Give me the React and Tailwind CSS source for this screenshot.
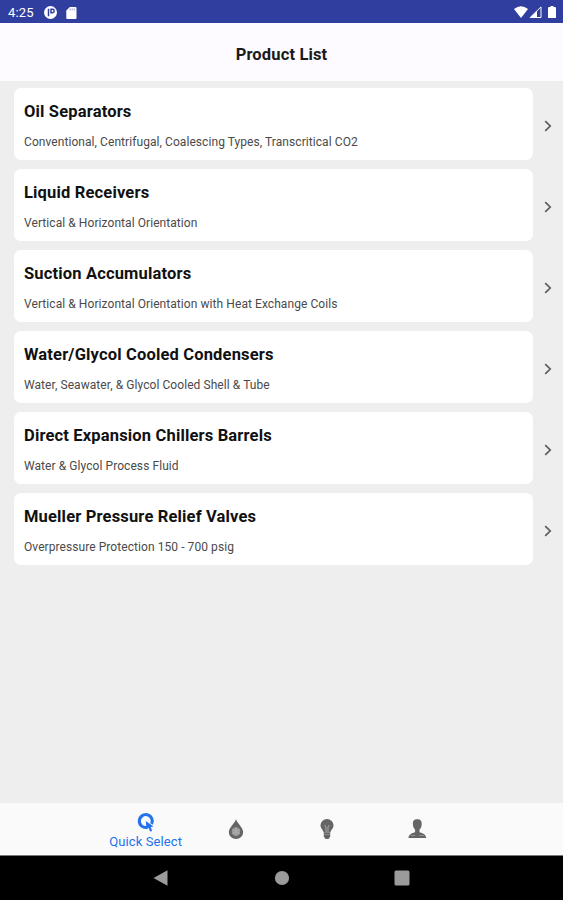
import React, { useState } from 'react';

const products = [
  { title: 'Oil Separators', detail: 'Conventional, Centrifugal, Coalescing Types, Transcritical CO2' },
  { title: 'Liquid Receivers', detail: 'Vertical & Horizontal Orientation' },
  { title: 'Suction Accumulators', detail: 'Vertical & Horizontal Orientation with Heat Exchange Coils' },
  { title: 'Water/Glycol Cooled Condensers', detail: 'Water, Seawater, & Glycol Cooled Shell & Tube' },
  { title: 'Direct Expansion Chillers Barrels', detail: 'Water & Glycol Process Fluid' },
  { title: 'Mueller Pressure Relief Valves', detail: 'Overpressure Protection 150 - 700 psig' },
];

const QuickIcon = () => (
  <svg className="w-5 h-5" viewBox="0 0 20 20" fill="none">
    <path d="M11.200 15.400A6.500 6.500 0 1 1 15.600 12" stroke="currentColor" strokeWidth="3.100" />
    <path d="M9.800 9L17.500 14.500l-2.700.4 1.300 4-2 .7-1.500-3.900-2.200 1.600z" fill="currentColor" />
  </svg>
);

const DropIcon = () => (
  <svg className="w-5 h-5" viewBox="0 0 20 20" fill="none">
    <path d="M10 0C9.400 3.600 2.800 8.600 2.800 13.100a7.200 6.900 0 0 0 14.400 0C17.200 8.600 10.600 3.600 10 0z" fill="currentColor" />
    <circle cx="10" cy="12.600" r="4.300" fill="#999" />
    <path d="M10 8.500v8.200M6.400 10.500l7.200 4.200M13.600 10.500l-7.200 4.200" stroke="#b0b0b0" strokeWidth="1" />
  </svg>
);

const BulbIcon = () => (
  <svg className="w-5 h-5" viewBox="0 0 20 20" fill="none">
    <path d="M10 0a6.500 6.300 0 0 0-6.500 6.400c0 3 2.800 4.400 3.100 7.100h6.800c.3-2.700 3.100-4.100 3.100-7.100A6.500 6.300 0 0 0 10 0z" fill="currentColor" />
    <path d="M9 13V8L7.600 6M11 13V8l1.400-2" stroke="#a8a8a8" strokeWidth="1" />
    <path d="M6.800 13.500h6.400v4L11.500 20h-3l-1.700-2.500z" fill="currentColor" />
    <path d="M7 15.500h6" stroke="#999" strokeWidth=".7" />
  </svg>
);

const PersonIcon = () => (
  <svg className="w-5 h-5" viewBox="0 0 20 20" fill="none">
    <path d="M10.300 .3C7 .3 5.700 2.300 5.900 5.200c.1 2.400 1 4.300 2.200 5.400v2.700c-2.600.9-6.200 1.500-6.700 5.800h17.800c-.5-4.300-4.100-4.900-6.700-5.800v-2.700c1.200-1.100 2.100-3 2.200-5.400C14.900 2.300 13.600 .3 10.300 .3z" fill="currentColor" />
    <path d="M3.700 16.500h4.500M12.300 16.500h4.500" stroke="#999" strokeWidth=".9" />
  </svg>
);

const tabs = [
  { id: 'quick', label: 'Quick Select', icon: QuickIcon },
  { id: 'fluids', icon: DropIcon },
  { id: 'tips', icon: BulbIcon },
  { id: 'account', icon: PersonIcon },
];

const StatusBar = () => (
  <div className="h-[23px] shrink-0 bg-[#303f9f] text-white flex items-center justify-between pl-2 pr-[7px]">
    <div className="flex items-center pt-[2px]">
      <span className="w-[36px] text-[13px] leading-4 tracking-[0.15px]">4:25</span>
      <svg className="w-[13px] h-[13px]" viewBox="0 0 13 13">
        <circle cx="6.500" cy="6.500" r="6.500" fill="#fff" />
        <path d="M4.500 2.800v7.500M7 3.300h1.500a1.700 1.700 0 0 1 0 3.400H7z" stroke="#303f9f" strokeWidth="1.500" fill="none" />
      </svg>
      <svg className="ml-[9px] w-[11px] h-3" viewBox="0 0 11 12">
        <path d="M3.800 0H9.500Q10.500 0 10.500 1V11Q10.500 12 9.500 12H1.300Q.3 12 .3 11V3.600z" fill="#fff" />
        <path d="M4.200 1.500v1.800M6.200 1.500v1.800M8.200 1.500v1.800" stroke="#303f9f" strokeWidth=".5" />
      </svg>
    </div>
    <div className="flex items-center pt-px">
      <svg className="w-[14px] h-3" viewBox="0 0 14 12">
        <path d="M7 12L0 3Q7-2.400 14 3z" fill="#fff" />
      </svg>
      <svg className="ml-[1px] w-[13px] h-3" viewBox="0 0 13 12">
        <path d="M1.200 11.500L12 .9v10.600z" fill="none" stroke="#fff" strokeWidth="1" />
        <path d="M.5 12L8 4.700V12z" fill="#fff" />
      </svg>
      <svg className="ml-[6px] w-2 h-3" viewBox="0 0 8 12">
        <path d="M2.500 0h3v1H7q1 0 1 1v9q0 2-2 2H2q-2 0-2-2V2q0-1 1-1h1.500z" fill="#fff" />
      </svg>
    </div>
  </div>
);

const ProductRow = ({ title, detail }) => (
  <div className="flex items-center">
    <div className="w-[519.5px] h-[72px] bg-white rounded-[7px] pl-[10.5px] pt-[13px]">
      <h2 className="text-[16.5px] leading-[22px] font-bold tracking-[0.165px] text-[#111]">{title}</h2>
      <p className="mt-[11px] text-[12px] leading-4 tracking-[0.07px] text-[#4a4a4a]">{detail}</p>
    </div>
    <svg className="ml-[11px] mt-1 w-[8px] h-[12px]" viewBox="0 0 8 12" fill="none">
      <path d="M1.200 1.200L6.200 6l-5 4.800" stroke="#5c5c5c" strokeWidth="1.700" />
    </svg>
  </div>
);

const App = () => {
  const [active, setActive] = useState('quick');

  return (
    <div className="w-[563px] h-[900px] flex flex-col overflow-hidden bg-[#eeeeee] font-['Roboto',sans-serif]">
      <StatusBar />

      {/* Header */}
      <header className="h-[58px] shrink-0 bg-[#fdfbff] flex items-center justify-center pt-[5px]">
        <h1 className="text-[16.5px] leading-5 font-bold tracking-[0.15px] text-[#1a1a1a]">Product List</h1>
      </header>

      {/* Product list */}
      <main className="flex-1 flex flex-col gap-[9.05px] pt-[7px] pl-[13.5px]">
        {products.map((product) => (
          <ProductRow key={product.title} title={product.title} detail={product.detail} />
        ))}
      </main>

      {/* Bottom tabs */}
      <nav className="h-[52px] shrink-0 bg-[#fafafa] flex justify-center">
        {tabs.map(({ id, label, icon: Icon }) => (
          <button
            key={id}
            onClick={() => setActive(id)}
            className={`w-[90.6px] flex flex-col items-center ${label ? 'pt-[9px]' : 'pt-[16px]'} ${
              active === id ? 'text-[#2672ee]' : 'text-[#656565]'
            }`}
          >
            <Icon />
            {label && <span className="mt-[2px] text-[13px] leading-4 tracking-[0.1px] whitespace-nowrap">{label}</span>}
          </button>
        ))}
      </nav>

      {/* System navigation */}
      <div className="h-[45px] shrink-0 bg-black border-t border-[#777] flex items-center justify-center gap-[104.5px] text-[#9b9b9b]">
        <svg className="w-4 h-4" viewBox="0 0 16 16" fill="currentColor"><path d="M.5 8L14.500 .3v15.400z" /></svg>
        <svg className="w-4 h-4" viewBox="0 0 16 16" fill="currentColor"><circle cx="8" cy="8" r="7.100" /></svg>
        <svg className="w-4 h-4" viewBox="0 0 16 16" fill="currentColor"><rect x=".5" y=".5" width="15" height="15" rx="1.500" /></svg>
      </div>
    </div>
  );
};

export default App;
